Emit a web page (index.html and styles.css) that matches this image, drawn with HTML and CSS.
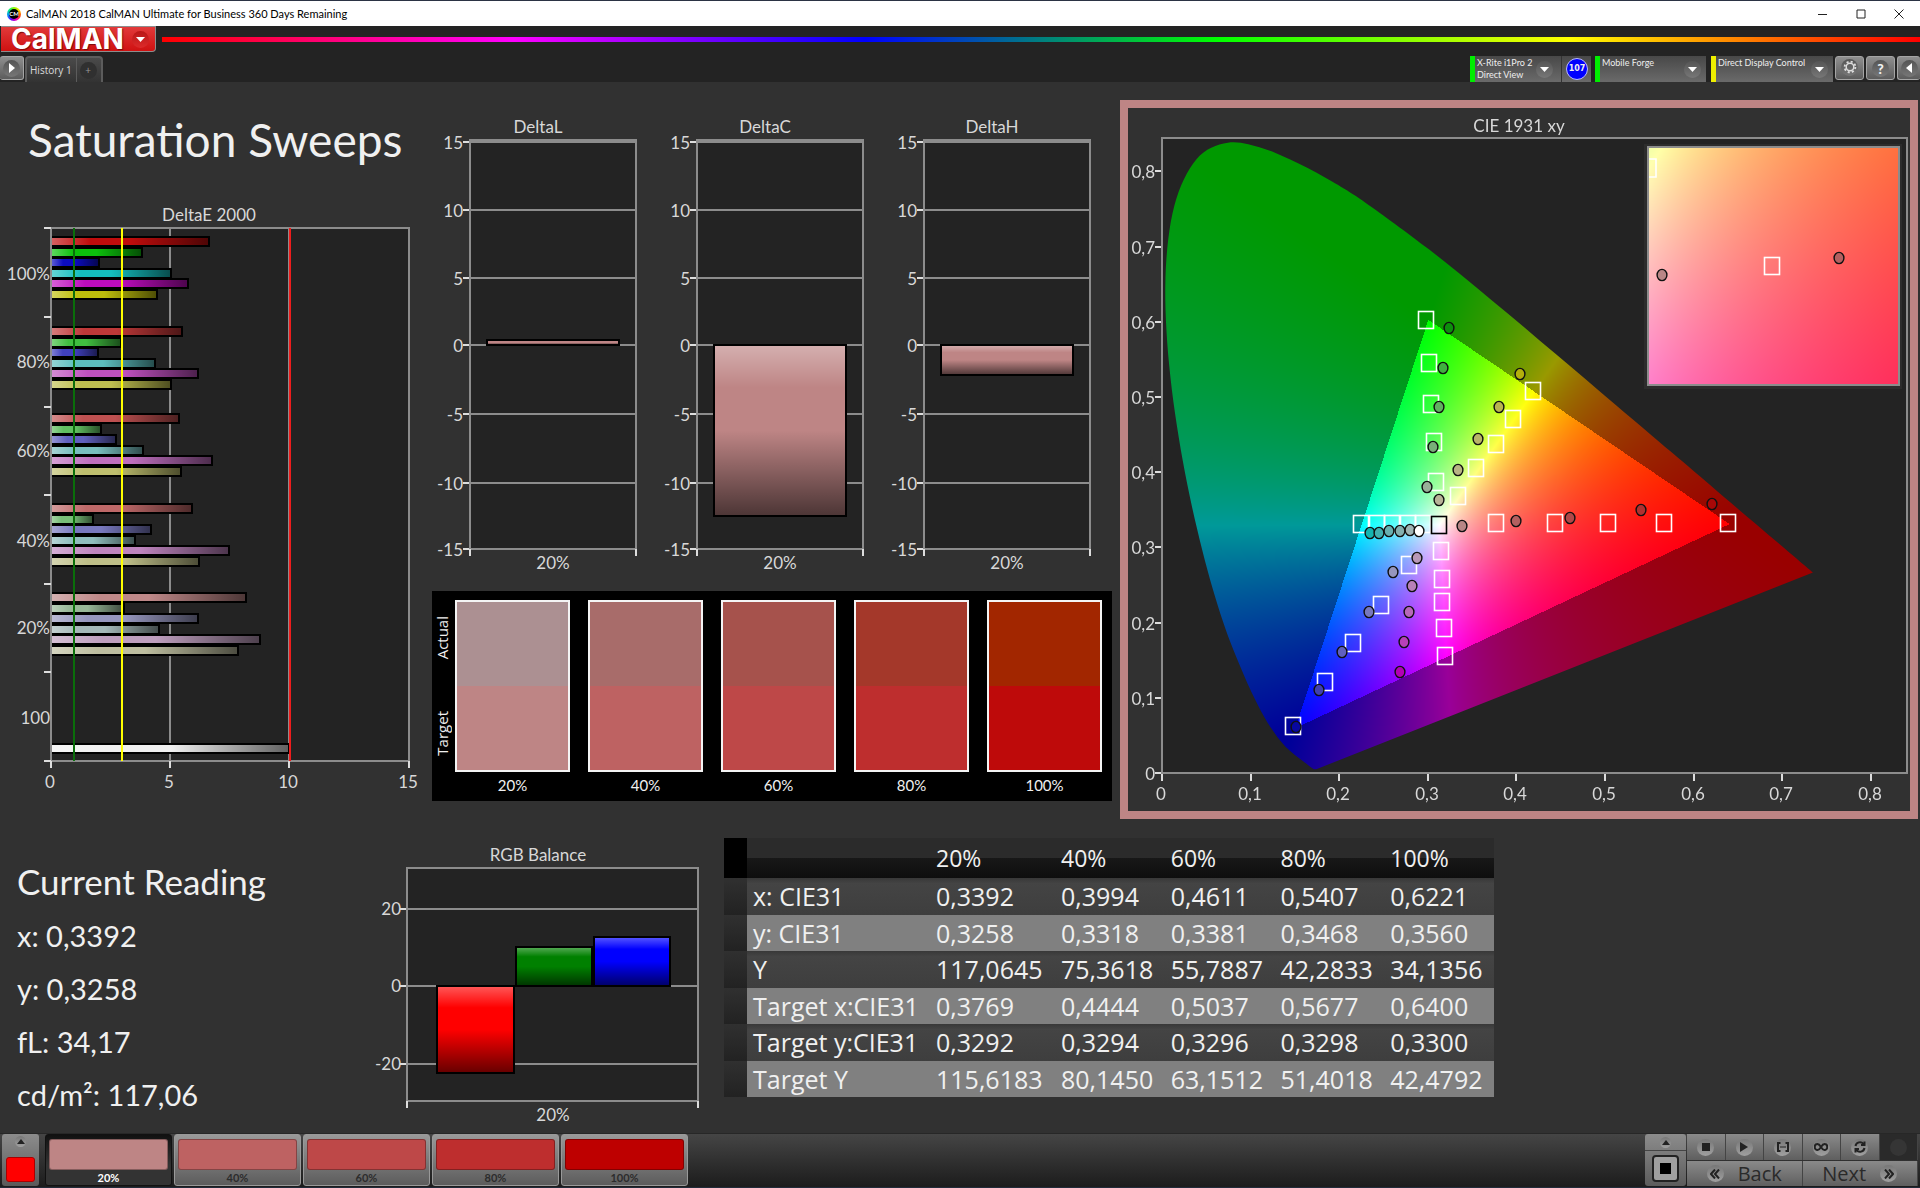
FILE: index.html
```html
<!DOCTYPE html>
<html lang="en">
<head>
    <meta charset="UTF-8">
    <meta name="viewport" content="width=device-width, initial-scale=1.0">
    <title>CalMAN 2018 CalMAN Ultimate for Business 360 Days Remaining</title>
    <link rel="stylesheet" href="styles.css">
</head>
<body>

    <!-- Window title bar -->
    <div class="titlebar">
        <span class="app-icon">CM</span>
        <span class="app-title">CalMAN 2018 CalMAN Ultimate for Business 360 Days Remaining</span>
        <div class="window-buttons">
            <button aria-label="Minimize"><svg width="10" height="10" viewBox="0 0 10 10"><path d="M0 5.5h9"/></svg></button>
            <button aria-label="Maximize"><svg width="10" height="10" viewBox="0 0 10 10"><path d="M1 1h8v8H1z"/></svg></button>
            <button aria-label="Close"><svg width="10" height="10" viewBox="0 0 10 10"><path d="M.5.5l9 9M9.500.5l-9 9"/></svg></button>
        </div>
    </div>

    <!-- Logo menu and rainbow line -->
    <div class="brand-row">
        <button class="logo">CalMAN <span class="round logo-arrow"><svg width="9" height="5" viewBox="0 0 9 5"><path d="M0 0h9L4.500 5z"/></svg></span></button>
        <div class="rainbow"></div>
    </div>

    <!-- Tabs and connected devices -->
    <header class="toolbar">
        <button class="metal play" aria-label="Show workflow"><span class="round"><svg width="6" height="10" viewBox="0 0 6 10"><path d="M0 0l6 5-6 5z"/></svg></span></button>
        <nav class="tabs">
            <button class="tab">History 1</button>
            <button class="tab tab-add" aria-label="Add tab"><span class="round">+</span></button>
        </nav>
        <div class="devices">
            <button class="device green meter"><span>X-Rite i1Pro 2<br>Direct View</span><i class="round"><svg width="9" height="5" viewBox="0 0 9 5"><path d="M0 0h9L4.500 5z"/></svg></i></button>
            <div class="reading-count"><b>107</b></div>
            <button class="device green source"><span>Mobile Forge</span><i class="round"><svg width="9" height="5" viewBox="0 0 9 5"><path d="M0 0h9L4.500 5z"/></svg></i></button>
            <button class="device yellow display"><span>Direct Display Control</span><i class="round"><svg width="9" height="5" viewBox="0 0 9 5"><path d="M0 0h9L4.500 5z"/></svg></i></button>
            <button class="metal square" aria-label="Settings"><span class="round"><svg width="14" height="14" viewBox="0 0 14 14"><circle cx="7" cy="7" r="3.800" fill="none" stroke="#ddd" stroke-width="1.500"/><circle cx="7" cy="7" r="5.400" fill="none" stroke="#ddd" stroke-width="1.800" stroke-dasharray="2.100 2.140"/></svg></span></button>
            <button class="metal square help" aria-label="Help"><span class="round">?</span></button>
            <button class="metal square last" aria-label="Collapse"><span class="round"><svg width="6" height="10" viewBox="0 0 6 10"><path d="M6 0L0 5l6 5z"/></svg></span></button>
        </div>
    </header>

    <main>
        <div class="top-row">
            <section class="delta-e">
                <h1>Saturation Sweeps</h1>
                <svg id="deltaE" class="chart" viewBox="0 200 432 610"></svg>
            </section>

            <section class="middle">
                <svg id="deltaLCH" class="chart" viewBox="432 82 680 509"></svg>
                <div class="swatches">
                    <div class="swatch-side"><span>Actual</span><span>Target</span></div>
                    <div class="swatch"><div class="pair s20"></div>20%</div>
                    <div class="swatch"><div class="pair s40"></div>40%</div>
                    <div class="swatch"><div class="pair s60"></div>60%</div>
                    <div class="swatch"><div class="pair s80"></div>80%</div>
                    <div class="swatch"><div class="pair s100"></div>100%</div>
                </div>
            </section>

            <section class="cie">
                <div class="cie-panel">
                    <canvas id="gamut" width="782" height="703"></canvas>
                    <svg id="cieOverlay" class="chart" viewBox="1128 108 782 703"></svg>
                </div>
            </section>
        </div>

        <div class="bottom-row">
            <section class="reading">
                <h2>Current Reading</h2>
                <p>x: 0,3392</p>
                <p>y: 0,3258</p>
                <p>fL: 34,17</p>
                <p>cd/m²: 117,06</p>
            </section>

            <svg id="rgbBalance" class="chart" viewBox="370 838 354 295"></svg>

            <table class="results">
                <thead>
                    <tr><th class="gutter"></th><th class="name"></th><th class="first">20%</th><th>40%</th><th>60%</th><th>80%</th><th>100%</th></tr>
                </thead>
                <tbody>
                    <tr><td class="gutter"></td><td>x: CIE31</td><td>0,3392</td><td>0,3994</td><td>0,4611</td><td>0,5407</td><td>0,6221</td></tr>
                    <tr><td class="gutter"></td><td>y: CIE31</td><td>0,3258</td><td>0,3318</td><td>0,3381</td><td>0,3468</td><td>0,3560</td></tr>
                    <tr><td class="gutter"></td><td>Y</td><td>117,0645</td><td>75,3618</td><td>55,7887</td><td>42,2833</td><td>34,1356</td></tr>
                    <tr><td class="gutter"></td><td>Target x:CIE31</td><td>0,3769</td><td>0,4444</td><td>0,5037</td><td>0,5677</td><td>0,6400</td></tr>
                    <tr><td class="gutter"></td><td>Target y:CIE31</td><td>0,3292</td><td>0,3294</td><td>0,3296</td><td>0,3298</td><td>0,3300</td></tr>
                    <tr><td class="gutter"></td><td>Target Y</td><td>115,6183</td><td>80,1450</td><td>63,1512</td><td>51,4018</td><td>42,4792</td></tr>
                </tbody>
            </table>
        </div>
    </main>

    <!-- Pattern selector and transport controls -->
    <footer>
        <button class="current-pattern" aria-label="Current pattern">
            <span class="round small"><svg width="8" height="5" viewBox="0 0 8 5"><path d="M0 5h8L4 0z"/></svg></span>
            <span class="current-color"></span>
        </button>
        <div class="patterns">
            <button class="pattern active"><span class="p20"></span>20%</button>
            <button class="pattern"><span class="p40"></span>40%</button>
            <button class="pattern"><span class="p60"></span>60%</button>
            <button class="pattern"><span class="p80"></span>80%</button>
            <button class="pattern"><span class="p100"></span>100%</button>
        </div>
        <div class="transport">
            <div class="stop-column">
                <button class="expand" aria-label="Expand"><span class="round small"><svg width="8" height="5" viewBox="0 0 8 5"><path d="M0 5h8L4 0z"/></svg></span></button>
                <button class="stop-all" aria-label="Pattern window"><span></span></button>
            </div>
            <div class="controls">
                <button aria-label="Stop"><span class="round"><svg width="8" height="8" viewBox="0 0 8 8"><path d="M0 0h8v8H0z"/></svg></span></button>
                <button aria-label="Read"><span class="round"><svg width="8" height="10" viewBox="0 0 8 10"><path d="M0 0l8 5-8 5z"/></svg></span></button>
                <button aria-label="Read series"><span class="round"><svg class="line" width="12" height="10" viewBox="0 0 12 10"><path d="M3.500 1H1v8h2.500M8.500 1H11v8H8.500M3.500 5h1M5.500 5h1M7.500 5h1"/></svg></span></button>
                <button aria-label="Read continuous"><span class="round"><svg class="line" width="14" height="8" viewBox="0 0 14 8"><path d="M7 4C5.500 1.500 4.500 1 3.500 1a2.800 3 0 0 0 0 6C4.500 7 5.500 6.500 7 4s2.500-3 3.500-3a2.800 3 0 0 1 0 6C9.500 7 8.500 6.500 7 4z"/></svg></span></button>
                <button aria-label="Repeat"><span class="round"><svg class="line" width="12" height="12" viewBox="0 0 12 12"><path d="M1.500 5A4.500 4.500 0 0 1 9.500 3M10.500 7A4.500 4.500 0 0 1 2.500 9M10.500.5V4H7M1.500 11.500V8H5"/></svg></span></button>
                <button class="off" aria-label="Status" disabled><span class="round"></span></button>
                <button class="step"><span class="round"><svg class="line" width="10" height="10" viewBox="0 0 10 10"><path d="M5 .5L1 5l4 4.500M9 .5L5 5l4 4.500"/></svg></span>Back</button>
                <button class="step">Next<span class="round"><svg class="line" width="10" height="10" viewBox="0 0 10 10"><path d="M5 .5L9 5 5 9.500M1 .5L5 5 1 9.500"/></svg></span></button>
            </div>
        </div>
    </footer>

    <script src="script.js"></script>
</body>
</html>
```
FILE: styles.css
```css
/* Base styles */
* {
    box-sizing: border-box;
}

body {
    margin: 0;
    min-height: 100vh;
    display: flex;
    flex-direction: column;
    background: #232323;
    color: #f0f0f0;
    font-family: Lato, "Open Sans", sans-serif;
}

button {
    margin: 0;
    padding: 0;
    border: none;
    background: none;
    color: inherit;
    font-family: inherit;
    cursor: pointer;
}

h1, h2, p {
    margin: 0;
    font-weight: 400;
}

svg {
    display: block;
}

/* Title bar */
.titlebar {
    display: flex;
    align-items: center;
    height: 26px;
    padding: 0 2px 0 7px;
    border-top: 1px solid #2b3344;
    background: #fff;
    color: #000;
}

.app-icon {
    width: 14px;
    height: 14px;
    border-radius: 50%;
    border: 2px solid transparent;
    background: linear-gradient(#000, #000) padding-box,
        conic-gradient(#8f0, #fd0, #f40, #f0a, #60f, #08f, #0e8, #8f0) border-box;
    color: #fff;
    font-size: 6px;
    font-weight: 700;
    line-height: 10px;
    text-align: center;
}

.app-title {
    margin-left: 5px;
    font-size: 11px;
}

.window-buttons {
    display: flex;
    margin-left: auto;
}

.window-buttons button {
    width: 38px;
    height: 24px;
    padding: 0 14px;
}

.window-buttons path {
    fill: none;
    stroke: #222;
}

/* Logo row */
.brand-row {
    display: flex;
    align-items: center;
    gap: 6px;
    height: 26px;
    padding-left: 1px;
    background: #232323;
}

.logo {
    display: flex;
    align-items: center;
    justify-content: space-between;
    width: 155px;
    height: 26px;
    padding: 0 6px 0 10px;
    border: 1px solid #8d8d8d;
    border-left: none;
    border-radius: 0 0 4px 0;
    background: linear-gradient(#e23a3a, #cf1111);
    color: #fff;
    font-family: Inter, sans-serif;
    font-size: 28px;
    font-weight: 700;
    line-height: 24px;
    text-shadow: 1px 1px 1px #7a0a0a;
}

.rainbow {
    flex: 1;
    height: 5px;
    background: linear-gradient(90deg, #f00, #f0f 20%, #00f 40%, #0f0 60%, #ff0 80%, #f00);
}

/* Round recess under the small glyphs */
.round {
    display: inline-flex;
    align-items: center;
    justify-content: center;
    flex: none;
    width: 17px;
    height: 17px;
    border-radius: 50%;
    background: linear-gradient(#555, #777);
}

.round path {
    fill: #fff;
}

.logo-arrow {
    background: linear-gradient(#b81717, #dd2a2a);
}

/* Tab row */
.toolbar {
    display: flex;
    height: 30px;
    padding-top: 4px;
    background: #232323;
}

.metal {
    border: 1px solid #a5a5a5;
    border-radius: 3px;
    background: linear-gradient(#8f8f8f, #5c5c5c);
}

.play {
    width: 24px;
    height: 24px;
    border-left: none;
}

.tabs {
    display: flex;
    margin-left: 1px;
    border: 2px solid #5c5c5c;
    border-bottom: none;
    border-radius: 4px 4px 0 0;
    background: linear-gradient(#4a4a4a, #333);
}

.tab {
    padding: 0 4px 0 3px;
    color: #ddd;
    font-family: "Open Sans", sans-serif;
    font-size: 10px;
}

.tab-add {
    border-left: 1px solid #5c5c5c;
    color: #999;
}

.tab-add .round {
    background: #303030;
}

.devices {
    display: flex;
    margin-left: auto;
}

.device {
    display: flex;
    justify-content: space-between;
    height: 26px;
    padding: 1px 5px 0 2px;
    border-left: 5px solid #0e0;
    background: linear-gradient(#484848, #6a6a6a);
    color: #eee;
    font-size: 9px;
    line-height: 12px;
    text-align: left;
    white-space: nowrap;
}

.device.yellow {
    border-color: #ee0;
}

.device .round {
    margin-top: 4px;
}

.meter {
    width: 91px;
    padding-right: 8px;
}

.source {
    width: 111px;
    margin-left: 4px;
}

.display {
    width: 122px;
    margin-left: 5px;
}

.reading-count {
    width: 30px;
    height: 26px;
    padding: 2px 4px;
    border-left: 1px solid #333;
    background: linear-gradient(#484848, #6a6a6a);
}

.reading-count b {
    display: block;
    width: 22px;
    height: 22px;
    border: 1px solid #bbf;
    border-radius: 50%;
    background: #00f;
    font-family: "DejaVu Sans", sans-serif;
    font-size: 8px;
    line-height: 20px;
    text-align: center;
}

.square {
    width: 29px;
    height: 24px;
    margin-left: 2px;
}

.help {
    font-size: 14px;
    font-weight: 900;
}

.last {
    width: 23px;
    border-right: none;
}

/* Main area */
main {
    flex: 1;
    background: #313131;
}

.top-row {
    display: grid;
    grid-template-columns: 432fr 688fr 800fr;
}

.chart {
    width: 100%;
}

.chart text {
    fill: #d8d8d8;
    font-size: 17px;
}

h1 {
    padding: 28px 28px 30px;
    font-size: 46px;
    line-height: 60px;
    white-space: nowrap;
}

.middle {
    padding-right: 8px;
}

/* Actual and target colors */
.swatches {
    display: flex;
    gap: 18px;
    height: 210px;
    padding: 9px 10px 0 1px;
    background: #000;
}

.swatch-side {
    display: flex;
    flex-direction: column;
    justify-content: space-between;
    align-items: center;
    width: 19px;
    height: 172px;
    margin-right: -15px;
    padding: 16px 0;
    font-family: "Open Sans", sans-serif;
    font-size: 15px;
    line-height: 19px;
}

.swatch-side span {
    writing-mode: vertical-rl;
    transform: rotate(180deg);
}

.swatch {
    flex: 1;
    font-size: 15px;
    line-height: 26px;
    text-align: center;
}

.pair {
    height: 172px;
    border: 2px solid #f4f4f4;
}

.s20 { background: linear-gradient(#ac9092 50%, #be8585 50%); }
.s40 { background: linear-gradient(#a86c6a 50%, #be6262 50%); }
.s60 { background: linear-gradient(#a6524c 50%, #be4848 50%); }
.s80 { background: linear-gradient(#a4382a 50%, #be2e2e 50%); }
.s100 { background: linear-gradient(#a22600 50%, #be0a0a 50%); }

/* Chromaticity diagram */
.cie {
    padding: 18px 2px 0 0;
}

.cie-panel {
    display: grid;
    border: 8px solid #be8585;
}

.cie-panel > * {
    grid-area: 1 / 1;
    width: 100%;
}

/* Bottom row */
.bottom-row {
    display: grid;
    grid-template-columns: 370fr 354fr 1196fr;
    align-items: start;
    padding-top: 19px;
}

.reading {
    padding: 15px 0 0 17px;
    font-size: 29px;
    line-height: 53px;
}

h2 {
    font-size: 35px;
    line-height: 56px;
}

.results {
    width: 770px;
    height: 259px;
    border-collapse: collapse;
    table-layout: fixed;
    font-family: "Open Sans", sans-serif;
    font-size: 25px;
    line-height: 30px;
}

.results th, .results td {
    padding: 0 0 0 6px;
    font-weight: 400;
    text-align: left;
    white-space: nowrap;
}

.results th {
    height: 40px;
    background: linear-gradient(#2b2b2b 50%, #181818 50%, #0e0e0e);
    font-size: 23px;
}

.results td {
    background: linear-gradient(#383838, #444 15%, #3e3e3e);
}

.results tr:nth-child(even) td {
    background: #808080;
}

.results tr .gutter, .results tr:nth-child(even) .gutter {
    width: 23px;
    background: linear-gradient(#303030, #222);
}

.results thead tr .gutter {
    background: #000;
}

.results .name {
    width: 183px;
}

.results .first {
    width: 125px;
}

/* Footer */
footer {
    display: flex;
    height: 55px;
    padding: 0 2px 1px;
    border-top: 1px solid #272727;
    border-bottom: 1px solid #222b3a;
    background: linear-gradient(#454545, #1c1c1c);
}

.round.small {
    width: 11px;
    height: 11px;
}

footer .round {
    background: linear-gradient(#777, #a0a0a0);
}

footer .round path {
    fill: #222;
}

footer .line path {
    fill: none;
    stroke: #222;
    stroke-width: 2;
}

.current-pattern {
    display: flex;
    flex-direction: column;
    align-items: center;
    justify-content: space-between;
    width: 37px;
    padding: 2px 0 4px;
    border-radius: 3px;
    background: linear-gradient(#8c8c8c, #5a5a5a);
}

.current-color {
    width: 29px;
    height: 25px;
    border: 1px solid #a00;
    border-radius: 3px;
    background: #f00;
}

.patterns {
    display: flex;
    gap: 2px;
    margin-left: 6px;
}

.pattern {
    width: 127px;
    padding: 4px 3px 0;
    border: 1px solid #999;
    border-radius: 3px;
    background: linear-gradient(#999, #5c5c5c);
    color: #2c2c2c;
    font-size: 11px;
    font-weight: 700;
    line-height: 16px;
}

.pattern span {
    display: block;
    height: 31px;
    border: 1px solid rgba(0, 0, 0, 0.3);
    border-radius: 3px;
}

.pattern.active {
    border-color: #111;
    background: linear-gradient(#111, #333 60%);
    color: #fff;
}

.p20 { background: #be8585; }
.p40 { background: #be6262; }
.p60 { background: #be4848; }
.p80 { background: #be2e2e; }
.p100 { background: #be0000; }

.transport {
    display: flex;
    gap: 1px;
    margin-left: auto;
}

.stop-column {
    display: flex;
    flex-direction: column;
    align-items: center;
    width: 41px;
    border-radius: 3px;
    background: linear-gradient(#8c8c8c, #5c5c5c);
}

.expand {
    display: flex;
    justify-content: center;
    align-items: center;
    width: 100%;
    height: 17px;
    border-bottom: 1px solid #444;
}

.stop-all {
    width: 27px;
    height: 27px;
    margin-top: 4px;
    padding: 6px;
    border: 2px solid #222;
    border-radius: 4px;
    background: #a0a0a0;
}

.stop-all span {
    display: block;
    height: 11px;
    background: #000;
}

.controls {
    display: grid;
    grid-template-columns: repeat(6, 1fr);
    grid-template-rows: 26px 25px;
    gap: 1px 0;
    width: 231px;
}

.controls button {
    display: flex;
    align-items: center;
    justify-content: center;
    border-right: 1px solid #444;
    background: linear-gradient(#8a8a8a, #5f5f5f);
}

.controls .step {
    grid-column: span 3;
    gap: 14px;
    color: #2a2a2a;
    font-family: "Open Sans", sans-serif;
    font-size: 20px;
    font-weight: 500;
    line-height: 24px;
}

.controls .off {
    background: #2a2a2a;
}

.controls .off .round {
    background: #353535;
}
```
FILE: script.js
```javascript
const NS = "http://www.w3.org/2000/svg";

// Small helpers to add shapes to a chart
function add(parent, name, attrs, text) {
    const el = document.createElementNS(NS, name);
    for (const key in attrs) {
        el.setAttribute(key, attrs[key]);
    }
    if (text !== undefined) {
        el.textContent = text;
    }
    parent.appendChild(el);
    return el;
}

function line(svg, x1, y1, x2, y2, color, width) {
    add(svg, "line", { x1, y1, x2, y2, stroke: color || "#8c8c8c", "stroke-width": width || 2 });
}

// Text placed by the middle of its digits
function label(svg, x, y, text, anchor) {
    add(svg, "text", { x, y: y + 6, "text-anchor": anchor || "middle" }, text);
}

function frame(svg, x, y, right, bottom) {
    add(svg, "rect", { x, y, width: right - x, height: bottom - y, fill: "#232323", stroke: "#8c8c8c", "stroke-width": 2 });
}

// Light to dark overlay for the bars
function shade(svg, id, horizontal) {
    const g = add(svg, "linearGradient", { id, x1: 0, y1: 0, x2: horizontal ? 1 : 0, y2: horizontal ? 0 : 1 });
    const stops = [[0, "#fff", 0.35], [0.25, "#fff", 0], [0.5, "#000", 0], [1, "#000", 0.6]];
    stops.forEach(s => add(g, "stop", { offset: s[0], "stop-color": s[1], "stop-opacity": s[2] }));
}

function bar(svg, x, y, right, bottom, color, shadeId) {
    const box = { x, y, width: right - x, height: bottom - y };
    add(svg, "rect", Object.assign({ fill: color }, box));
    add(svg, "rect", Object.assign({ fill: "url(#" + shadeId + ")", stroke: "#000", "stroke-width": 2 }, box));
}

// DeltaE 2000
function drawDeltaE() {
    const svg = document.getElementById("deltaE");
    shade(svg, "shadeH", true);
    label(svg, 209, 215, "DeltaE 2000");
    frame(svg, 51, 228, 409, 761);
    line(svg, 170, 229, 170, 760);
    line(svg, 289, 229, 289, 760);

    const groups = [
        { y: 241, ends: [209, 142, 99, 171, 188, 157], colors: ["#c00c0c", "#0cc00c", "#0c0cc0", "#14bebe", "#be0cbe", "#bebe0c"] },
        { y: 331, ends: [182, 121, 98, 155, 198, 171], colors: ["#be3838", "#40be40", "#4040be", "#5cbebe", "#be50be", "#bebe50"] },
        { y: 418, ends: [179, 101, 116, 143, 212, 181], colors: ["#be5050", "#60be60", "#6060be", "#78bebe", "#be6ebe", "#bebe6e"] },
        { y: 508, ends: [192, 93, 151, 135, 229, 199], colors: ["#be6868", "#78be78", "#7878be", "#90bebe", "#be84be", "#bebe88"] },
        { y: 597, ends: [246, 124, 198, 159, 260, 238], colors: ["#be8888", "#98b898", "#9696be", "#a4b8b8", "#be9ebe", "#bebea0"] }
    ];
    groups.forEach(g => g.ends.forEach((end, i) => {
        const y = Math.round(g.y + i * 10.6);
        bar(svg, 51, y - 4, end, y + 5, g.colors[i], "shadeH");
    }));
    bar(svg, 51, 744, 289, 753, "#f0f0f0", "shadeH");

    line(svg, 51, 228, 51, 761);
    line(svg, 74, 228, 74, 761, "#0a6e0a");
    line(svg, 122, 228, 122, 761, "#ffff00");
    line(svg, 290, 228, 290, 761, "#ee1c1c");

    [228, 317, 407, 495, 584, 672, 761].forEach(y => line(svg, 44, y, 51, y, "#ddd"));
    [["100%", 274], ["80%", 362], ["60%", 451], ["40%", 541], ["20%", 628], ["100", 718]]
        .forEach(t => label(svg, 50, t[1], t[0], "end"));
    [[0, 51], [5, 170], [10, 289], [15, 409]].forEach(t => {
        line(svg, t[1], 761, t[1], 768, "#ddd");
        label(svg, t[1] - 1, 782, t[0]);
    });
}

// DeltaL, DeltaC and DeltaH
function drawDeltaLCH() {
    const svg = document.getElementById("deltaLCH");
    shade(svg, "shadeV", false);
    const charts = [["DeltaL", 470, 340, 345], ["DeltaC", 697, 345, 516], ["DeltaH", 924, 345, 375]];
    charts.forEach(([title, left, top, bottom]) => {
        label(svg, left + 68, 127, title);
        frame(svg, left, 140, left + 166, 549);
        [[15, 142], [10, 210], [5, 278], [0, 345], [-5, 414], [-10, 483], [-15, 549]].forEach(t => {
            line(svg, left, t[1], left + 166, t[1]);
            line(svg, left - 7, t[1], left - 1, t[1], "#ddd");
            label(svg, left - 7, t[1] + 1, t[0], "end");
        });
        line(svg, left, 549, left, 556, "#ddd");
        line(svg, left + 166, 549, left + 166, 556, "#ddd");
        bar(svg, left + 17, top, left + 149, bottom, "#be8585", "shadeV");
        label(svg, left + 83, 563, "20%");
    });
}

// RGB Balance
function drawRGB() {
    const svg = document.getElementById("rgbBalance");
    shade(svg, "shadeRGB", false);
    label(svg, 538, 855, "RGB Balance");
    frame(svg, 407, 868, 698, 1101);
    [[20, 909], [0, 986], [-20, 1064]].forEach(t => {
        line(svg, 407, t[1], 698, t[1]);
        line(svg, 400, t[1], 406, t[1], "#ddd");
        label(svg, 401, t[1], t[0], "end");
    });
    line(svg, 407, 1101, 407, 1108, "#ddd");
    line(svg, 698, 1101, 698, 1108, "#ddd");
    bar(svg, 437, 986, 514, 1073, "#ff0000", "shadeRGB");
    bar(svg, 516, 947, 592, 986, "#008000", "shadeRGB");
    bar(svg, 594, 937, 670, 986, "#0000ff", "shadeRGB");
    label(svg, 553, 1115, "20%");
}

// Spectral locus, CIE 1931 2 degree observer
const locus = [
    [.1741, .0050], [.1714, .0051], [.1689, .0069], [.1644, .0109], [.1566, .0177], [.1440, .0297],
    [.1355, .0399], [.1241, .0578], [.1096, .0868], [.0913, .1327], [.0687, .2007], [.0454, .2950],
    [.0235, .4127], [.0082, .5384], [.0039, .6548], [.0139, .7502], [.0389, .8120], [.0743, .8338],
    [.1142, .8262], [.1547, .8059], [.1929, .7816], [.2296, .7543], [.3016, .6923], [.3731, .6245],
    [.4441, .5547], [.5125, .4866], [.5752, .4242], [.6270, .3725], [.6915, .3083], [.7347, .2653]
];

const plot = { left: 1162, bottom: 773, sx: 886, sy: 756 };
const originX = 1128;
const originY = 108;

function xyToRGB(x, y) {
    const X = x / y;
    const Z = (1 - x - y) / y;
    const rgb = [
        3.2406 * X - 1.5372 - 0.4986 * Z,
        -0.9689 * X + 1.8758 + 0.0415 * Z,
        0.0557 * X - 0.2040 + 1.0570 * Z
    ];
    const inside = Math.min(...rgb) >= 0;
    const max = Math.max(...rgb);
    const scale = (inside ? 255 : 153) / max;
    return rgb.map(v => Math.max(v, 0) * scale);
}

function paint(left, top, width, height, toXY) {
    const tile = document.createElement("canvas");
    tile.width = width;
    tile.height = height;
    const ctx = tile.getContext("2d");
    const image = ctx.createImageData(width, height);
    for (let j = 0; j < height; j++) {
        for (let i = 0; i < width; i++) {
            const [x, y] = toXY(left + i, top + j);
            const rgb = xyToRGB(x, Math.max(y, 0.0005));
            const k = (j * width + i) * 4;
            image.data[k] = rgb[0];
            image.data[k + 1] = rgb[1];
            image.data[k + 2] = rgb[2];
            image.data[k + 3] = 255;
        }
    }
    ctx.putImageData(image, 0, 0);
    return tile;
}

function drawGamut() {
    const ctx = document.getElementById("gamut").getContext("2d");
    ctx.translate(-originX, -originY);
    ctx.fillStyle = "#232323";
    ctx.fillRect(1162, 138, 745, 635);

    // Smooth curve through the locus points
    const p = locus.map(([x, y]) => [plot.left + x * plot.sx, plot.bottom - y * plot.sy]);
    ctx.save();
    ctx.beginPath();
    ctx.moveTo(p[0][0], p[0][1]);
    for (let i = 0; i < p.length - 1; i++) {
        const a = p[Math.max(i - 1, 0)], b = p[i], c = p[i + 1], d = p[Math.min(i + 2, p.length - 1)];
        ctx.bezierCurveTo(
            b[0] + (c[0] - a[0]) / 6, b[1] + (c[1] - a[1]) / 6,
            c[0] - (d[0] - b[0]) / 6, c[1] - (d[1] - b[1]) / 6,
            c[0], c[1]
        );
    }
    ctx.closePath();
    ctx.clip();
    ctx.drawImage(paint(1162, 138, 745, 635, (px, py) => [
        (px - plot.left) / plot.sx, (plot.bottom - py) / plot.sy
    ]), 1162, 138);
    ctx.restore();

    // Magnified area around the current reading
    ctx.fillStyle = "#2c2c2c";
    ctx.fillRect(1644, 144, 258, 245);
    ctx.drawImage(paint(1649, 148, 249, 236, (px, py) => [
        0.3392 + (px - 1662) / 2940, 0.3258 + (275 - py) / 2733
    ]), 1649, 148);
}

function target(svg, x, y, color) {
    add(svg, "rect", { x: x - 7.5, y: y - 8.5, width: 15, height: 17, fill: "none", stroke: color || "#fff", "stroke-width": 1.6 });
}

function measured(svg, x, y, color) {
    add(svg, "ellipse", { cx: x, cy: y, rx: 4.9, ry: 5.6, fill: color, stroke: "#111", "stroke-width": 1.4 });
}

function drawCIE() {
    const svg = document.getElementById("cieOverlay");
    label(svg, 1519, 126, "CIE 1931 xy");
    add(svg, "rect", { x: 1162, y: 138, width: 745, height: 635, fill: "none", stroke: "#8c8c8c", "stroke-width": 2 });
    for (let i = 0; i <= 8; i++) {
        const text = i ? "0," + i : "0";
        const x = Math.round(plot.left + i * 88.6);
        const y = Math.round(plot.bottom - i * 75.2);
        line(svg, x, 774, x, 781, "#ddd");
        line(svg, 1155, y, 1161, y, "#ddd");
        label(svg, x - 1, 794, text);
        label(svg, 1155, y + 1, text, "end");
    }

    [
        [1426, 320], [1429, 363], [1431, 404], [1434, 442], [1436, 482],
        [1533, 391], [1513, 419], [1496, 444], [1476, 468], [1458, 496],
        [1496, 523], [1555, 523], [1608, 523], [1664, 523], [1728, 523],
        [1361, 524], [1377, 524], [1392, 524], [1408, 524], [1423, 524],
        [1441, 551], [1442, 579], [1442, 602], [1444, 628], [1445, 656],
        [1409, 565], [1381, 605], [1353, 643], [1325, 682], [1293, 726]
    ].forEach(t => target(svg, t[0], t[1]));
    target(svg, 1439, 525, "#000");

    [
        [1462, 526, "#b98686"], [1516, 521, "#b46060"], [1570, 518, "#b04848"], [1641, 510, "#b03030"], [1712, 504, "#a80808"],
        [1449, 328, "#0c900c"], [1443, 368, "#40b040"], [1439, 407, "#60b060"], [1433, 447, "#78b078"], [1427, 487, "#98b098"],
        [1520, 374, "#b4b00c"], [1499, 407, "#b8b450"], [1478, 439, "#b8b468"], [1458, 470, "#b8b484"], [1439, 500, "#b8b498"],
        [1370, 533, "#14b4b0"], [1379, 533, "#40b0b0"], [1389, 531, "#68b0b0"], [1400, 531, "#84b0b0"], [1410, 530, "#a0b4b4"],
        [1419, 531, "#ffffff"],
        [1393, 572, "#9696be"], [1369, 612, "#7878be"], [1342, 652, "#6060be"], [1319, 690, "#4040b0"], [1296, 727, "#0808a0"],
        [1417, 558, "#b898b8"], [1412, 586, "#b880b8"], [1409, 612, "#b868b8"], [1404, 642, "#b840b8"], [1400, 672, "#b400b4"]
    ].forEach(m => measured(svg, m[0], m[1], m[2]));

    // Magnifier frame and its markers
    add(svg, "rect", { x: 1648, y: 147, width: 251, height: 238, fill: "none", stroke: "#8c8c8c", "stroke-width": 2 });
    add(svg, "path", { d: "M1649 159h7v18h-7", fill: "none", stroke: "#fff", "stroke-width": 1.6 });
    target(svg, 1772, 266);
    measured(svg, 1662, 275, "#b98686");
    measured(svg, 1839, 258, "#b46060");
}

drawDeltaE();
drawDeltaLCH();
drawRGB();
drawGamut();
drawCIE();
```
